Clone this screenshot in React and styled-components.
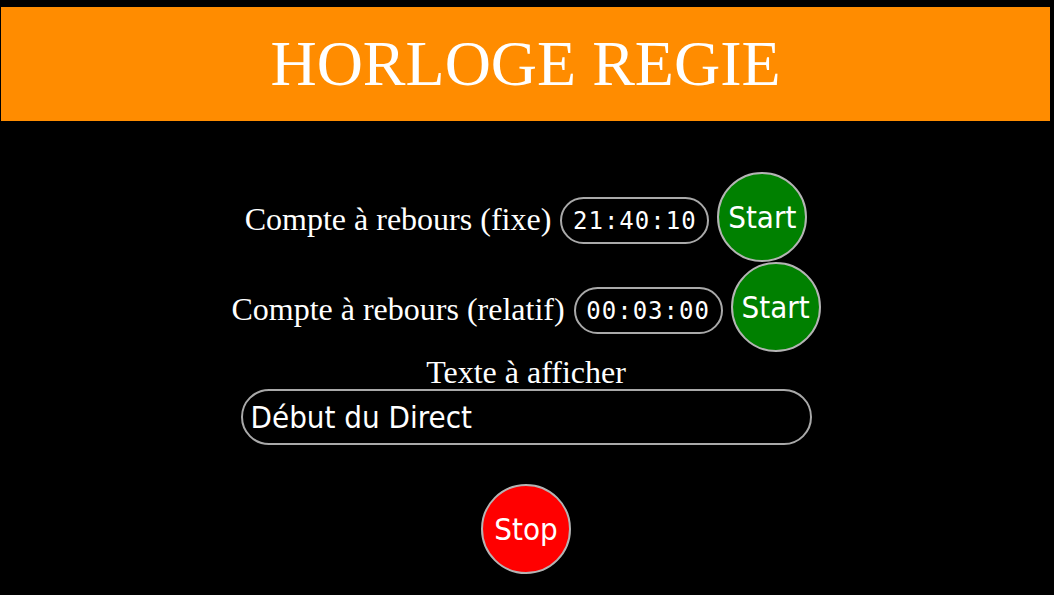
import React from 'react'
import styled, { createGlobalStyle } from 'styled-components'

const GlobalStyle = createGlobalStyle`
body {
  margin: 0;
  background: #000;
}
`

function App() {
  return (
    <Page>
      <GlobalStyle />
      <Header>
        <Title>HORLOGE REGIE</Title>
      </Header>
      <Main>
        <Row>
          <Label>Compte à rebours (fixe)</Label>
          <TimeBox>21:40:10</TimeBox>
          <RoundButton color="#008000">Start</RoundButton>
        </Row>
        <Row>
          <Label>Compte à rebours (relatif)</Label>
          <TimeBox>00:03:00</TimeBox>
          <RoundButton color="#008000">Start</RoundButton>
        </Row>
        <TextLabel>Texte à afficher</TextLabel>
        <TextInput defaultValue="Début du Direct" />
        <StopButton color="#ff0000">Stop</StopButton>
      </Main>
    </Page>
  )
}

export default App

const Page = styled.div`
width: 100vw;
min-height: 100vh;
background: #000;
overflow: hidden;
`

const Header = styled.div`
margin: 7px 4px 0 1px;
height: 114px;
background-color: #ff8c00;
display: flex;
align-items: center;
justify-content: center;
`

const Title = styled.h1`
margin: 0;
font-family: "Liberation Serif", serif;
font-weight: normal;
font-size: 64px;
color: #fff;
`

const Main = styled.div`
display: flex;
flex-direction: column;
align-items: center;
padding-top: 51px;
padding-right: 2px;
`

const Row = styled.div`
display: flex;
align-items: center;
height: 90px;
`

const Label = styled.span`
font-family: "Liberation Serif", serif;
font-size: 32px;
color: #fff;
margin-top: 4px;
margin-right: 9px;
`

const TimeBox = styled.div`
box-sizing: border-box;
width: 149px;
height: 47px;
margin-top: 7px;
margin-right: 8px;
border: 2px solid #a9a9a9;
border-radius: 24px;
display: flex;
align-items: center;
justify-content: center;
font-family: "DejaVu Sans Mono", monospace;
font-size: 24px;
letter-spacing: 1px;
color: #fff;
`

const RoundButton = styled.button`
box-sizing: border-box;
width: 90px;
height: 90px;
padding: 0;
border: 2px solid #b4b4b4;
border-radius: 50%;
background-color: ${p => p.color};
color: #fff;
font-family: "DejaVu Sans Condensed", "DejaVu Sans", sans-serif;
font-stretch: condensed;
font-size: 31px;
cursor: pointer;
`

const StopButton = styled(RoundButton)`
margin-top: 39px;
`

const TextLabel = styled.div`
font-family: "Liberation Serif", serif;
font-size: 32px;
line-height: 33px;
color: #fff;
margin-top: 4px;
`

const TextInput = styled.input`
box-sizing: border-box;
width: 571px;
height: 56px;
padding: 0 8px;
border: 2px solid #a9a9a9;
border-radius: 28px;
background: #000;
color: #fff;
font-family: "DejaVu Sans Condensed", "DejaVu Sans", sans-serif;
font-stretch: condensed;
font-size: 31px;
outline: none;
`
